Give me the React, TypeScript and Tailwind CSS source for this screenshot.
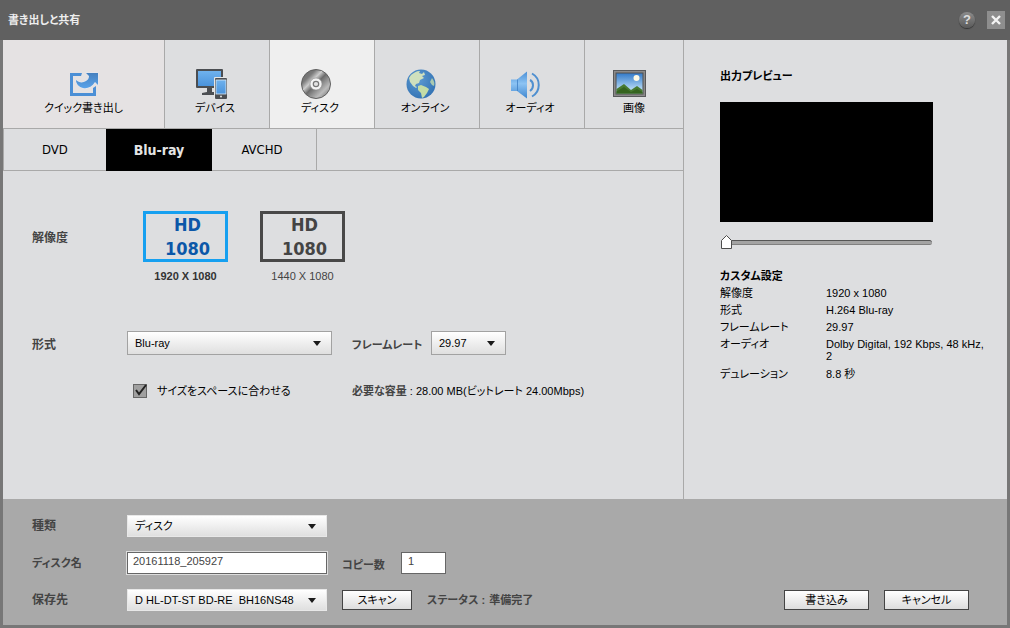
import React, { useState } from "react";
import clsx from "clsx";

const QuickIcon = () => (
  <svg width="32" height="32" viewBox="0 0 32 32">
    <defs>
      <linearGradient id="quick" x1="0" y1="0" x2="0" y2="1">
        <stop offset="0" stopColor="#4580bf" />
        <stop offset="1" stopColor="#5aa3ea" />
      </linearGradient>
    </defs>
    <path d="M14 5l-1 3H5v17h20v-5l3-2v10H2V5z" fill="#4b8fd6" />
    <path
      d="M18 5h12v12l-3-3c-3 5-8 7-12 6-4-1-7-4-7-8 3 3 7 3 10 1 2-1 3-3 3-5z"
      fill="url(#quick)"
      stroke="#e5eefa"
      strokeWidth="0.8"
      paintOrder="stroke"
    />
  </svg>
);

const DeviceIcon = () => (
  <svg width="32" height="32" viewBox="0 0 32 32">
    <defs>
      <linearGradient id="screen" x1="0" y1="0" x2="0" y2="1">
        <stop offset="0" stopColor="#6fb2ee" />
        <stop offset="1" stopColor="#4a93dc" />
      </linearGradient>
    </defs>
    <rect x="1" y="1" width="27" height="19" rx="1" fill="#4b4e52" />
    <rect x="3" y="3" width="23" height="15" fill="url(#screen)" />
    <path d="M12 20h5v4h2v3H7v-2l5-1z" fill="#4b4e52" />
    <rect x="19" y="9" width="13" height="22" rx="1" fill="#e6e6e6" />
    <rect x="20" y="10" width="12" height="21" rx="1" fill="#4b4e52" />
    <rect x="21" y="12" width="10" height="14" fill="url(#screen)" stroke="#dceaf7" strokeWidth="0.8" />
    <circle cx="26" cy="28.5" r="1" fill="#e8e8e8" />
  </svg>
);

const DiscIcon = () => (
  <svg width="32" height="32" viewBox="0 0 32 32">
    <defs>
      <linearGradient id="disc" x1="0" y1="0" x2="1" y2="1">
        <stop offset="0" stopColor="#606060" />
        <stop offset="0.25" stopColor="#7b7b7b" />
        <stop offset="0.38" stopColor="#cccccc" />
        <stop offset="0.5" stopColor="#6c6c6c" />
        <stop offset="0.75" stopColor="#bcbcbc" />
        <stop offset="1" stopColor="#5c5c5c" />
      </linearGradient>
    </defs>
    <circle cx="16" cy="16" r="14.5" fill="url(#disc)" stroke="#606060" />
    <circle cx="16" cy="16" r="6" fill="#f4f4f4" stroke="#8d8d8d" strokeWidth="0.6" />
    <circle cx="16" cy="16" r="2.7" fill="#e2e2e2" stroke="#777777" strokeWidth="1.2" />
  </svg>
);

const GlobeIcon = () => (
  <svg width="32" height="32" viewBox="0 0 32 32">
    <defs>
      <radialGradient id="globe" cx="0.4" cy="0.35" r="0.7">
        <stop offset="0" stopColor="#5d9ad2" />
        <stop offset="1" stopColor="#3272b3" />
      </radialGradient>
    </defs>
    <circle cx="16" cy="16" r="14.5" fill="url(#globe)" />
    <path
      d="M6 7c3-2 5-4 9-4l-1 2 3 1 2-2 1 3-3 1 2 2-4 2-1 3-3 1-1 2 2 1-1 1-3-2-3-4-1-4z"
      fill="#cfe0bd"
    />
    <path d="M13 18l3-1 5 2 3 2-2 4-3 4-2 1-1-5-3-3z" fill="#c3dca6" />
    <path d="M27 10c2 3 3 5 2 8l-2-1-2-3z" fill="#a9c9b0" />
  </svg>
);

const SpeakerIcon = () => (
  <svg width="32" height="32" viewBox="0 0 32 32">
    <defs>
      <linearGradient id="speaker" x1="0" y1="0" x2="0" y2="1">
        <stop offset="0" stopColor="#4a8fd6" />
        <stop offset="0.45" stopColor="#8cc3f3" />
        <stop offset="1" stopColor="#3f86cf" />
      </linearGradient>
    </defs>
    <path d="M1 11.500h6L17 3.500v27L7 23H1z" fill="url(#speaker)" />
    <path d="M7.500 11.500V23" stroke="#3f7fc4" strokeWidth="0.8" />
    <path d="M20 12c4 2 4 8 0 11" fill="none" stroke="#4e8fd0" strokeWidth="2" />
    <path d="M22 5.500c9 5 9 18 0 23" fill="none" stroke="#4e8fd0" strokeWidth="2" />
  </svg>
);

const PictureIcon = () => (
  <svg width="34" height="32" viewBox="0 0 34 32">
    <defs>
      <linearGradient id="sky" x1="0" y1="0" x2="0" y2="1">
        <stop offset="0" stopColor="#3179c9" />
        <stop offset="0.8" stopColor="#b9dcf6" />
      </linearGradient>
    </defs>
    <rect x="0.500" y="2.500" width="32" height="26" fill="#8a8a8a" stroke="#58595b" />
    <rect x="3" y="5" width="27" height="21" fill="url(#sky)" stroke="#505050" />
    <circle cx="23.500" cy="10" r="3" fill="#fffbe6" />
    <path d="M3.500 21L11 16l7 6 6-4 5.500 4v3.500h-26z" fill="#477a31" />
    <path d="M3.500 25.500v-2L11 19l7 5 6-3 5.500 3v1.500z" fill="#35641f" />
  </svg>
);

const mainTabs = [
  { label: "クイック書き出し", icon: <QuickIcon />, cell: "w-[162px] border-r bg-[#e5e2e3]" },
  { label: "デバイス", icon: <DeviceIcon />, cell: "w-[105px] border-r pr-1", iconBox: "mr-2" },
  { label: "ディスク", icon: <DiscIcon />, cell: "w-[105px] border-r pr-1 bg-[#efefef]", iconBox: "mr-2" },
  { label: "オンライン", icon: <GlobeIcon />, cell: "w-[105px] border-r pr-1", iconBox: "mr-2" },
  { label: "オーディオ", icon: <SpeakerIcon />, cell: "w-[105px] border-r pr-1", iconBox: "mr-2" },
  { label: "画像", icon: <PictureIcon />, cell: "flex-1", iconBox: "mr-2" },
];

const resolutions = [
  { id: "1920", label: "1920 X 1080" },
  { id: "1440", label: "1440 X 1080" },
];

const summary = [
  { name: "解像度", value: "1920 x 1080" },
  { name: "形式", value: "H.264 Blu-ray" },
  { name: "フレームレート", value: "29.97" },
  { name: "オーディオ", value: "Dolby Digital, 192 Kbps, 48 kHz, 2", long: true },
  { name: "デュレーション", value: "8.8 秒" },
];

type SelectProps = {
  id: string;
  options: string[];
  className?: string;
};

function Select({ id, options, className }: SelectProps) {
  return (
    <div className={clsx("relative", className)}>
      <select
        id={id}
        className="block h-full w-full appearance-none border border-inherit bg-linear-to-b from-white to-[#dfdfdf] pl-[7px] pr-5 text-[11px] font-normal text-black"
      >
        {options.map((option) => (
          <option key={option}>{option}</option>
        ))}
      </select>
      <svg
        className="pointer-events-none absolute right-[11px] top-1/2 -mt-0.5"
        width="8"
        height="5"
        viewBox="0 0 8 5"
      >
        <path d="M0 0h8L4 5z" fill="#1a1a1a" />
      </svg>
    </div>
  );
}

function Seek() {
  const [position, setPosition] = useState(0);

  return (
    <div className="relative flex h-4 w-[213px] items-center pl-1 pr-px">
      <input
        type="range"
        aria-label="プレビュー位置"
        value={position}
        onChange={(e) => setPosition(Number(e.target.value))}
        className="h-[5px] w-full appearance-none rounded-full border-b border-t border-b-[#808080] border-t-[#555555] bg-[#a3a3a3] [&::-webkit-slider-thumb]:appearance-none"
      />
      <svg
        className="pointer-events-none absolute top-px"
        style={{ left: 1 + position * 2 }}
        width="11"
        height="14"
        viewBox="0 0 11 14"
      >
        <path d="M0.500 5.500l5-5 5 5v8h-10z" fill="#ffffff" stroke="#4c4c4c" />
      </svg>
    </div>
  );
}

function App() {
  const [resolution, setResolution] = useState("1920");
  const [fitSize, setFitSize] = useState(true);

  return (
    <div className="flex min-h-screen flex-col bg-[#777777] font-['Liberation_Sans','Noto_Sans_CJK_JP',sans-serif] text-[11px] leading-4 text-black [font-feature-settings:'palt']">
      <header className="flex h-10 items-center justify-between bg-[#606060] pl-2 pr-[5px]">
        <h1 className="font-bold text-[#eeeeee]">書き出しと共有</h1>
        <div className="flex items-center gap-3">
          <button
            aria-label="ヘルプ"
            className="h-4 w-4 rounded-full bg-linear-to-b from-[#8c8c8c] to-[#5a5a5a] text-[13px] font-bold leading-4 text-[#dddddd] shadow-[0_1px_1px_#333333]"
          >
            ?
          </button>
          <button
            aria-label="閉じる"
            className="flex h-[18px] w-[18px] items-center justify-center bg-[#8e8e8e]"
          >
            <svg width="10" height="10" viewBox="0 0 10 10">
              <path d="M1 1l8 8M9 1L1 9" stroke="#f4f4f4" strokeWidth="2.400" />
            </svg>
          </button>
        </div>
      </header>

      <main className="mx-[3px] flex flex-1 bg-[#dddee0]">
        <section className="flex-1">
          <nav className="flex h-[89px] border-b border-[#a9a9a9]">
            {mainTabs.map((tab) => (
              <button
                key={tab.label}
                className={clsx(
                  "flex flex-col items-center justify-end border-[#a9a9a9] pb-3",
                  tab.cell
                )}
              >
                <span className={tab.iconBox}>{tab.icon}</span>
                <span>{tab.label}</span>
              </button>
            ))}
          </nav>

          <nav className="flex h-[42px] border-b border-[#a9a9a9] font-['DejaVu_Sans_Condensed','DejaVu_Sans',sans-serif] text-[13px]">
            <button className="w-[103px] border-l border-[#a9a9a9]">DVD</button>
            <button className="-mb-px w-[106px] bg-black text-[14px] font-bold text-[#e4e4e4]">
              Blu-ray
            </button>
            <button className="w-[105px] border-r border-[#a9a9a9] pr-1">AVCHD</button>
          </nav>

          <form className="pl-[29px] pt-10">
            <div className="flex">
              <span className="w-[95px] pt-[19px] text-[12px] font-bold text-[#444444]">解像度</span>
              <div className="flex gap-8 pl-4">
                {resolutions.map((item) => (
                  <label
                    key={item.id}
                    className={clsx(
                      "w-[85px] text-center",
                      resolution === item.id ? "font-bold text-[#333333]" : "text-[#444444]"
                    )}
                  >
                    <input
                      type="radio"
                      name="resolution"
                      className="sr-only"
                      checked={resolution === item.id}
                      onChange={() => setResolution(item.id)}
                    />
                    <span
                      className={clsx(
                        "mb-[6px] flex h-[51px] flex-col items-center justify-center border-[3px] pl-1 font-['DejaVu_Sans_Condensed','DejaVu_Sans',sans-serif] text-[18px] font-bold leading-6",
                        resolution === item.id
                          ? "border-[#16a0f0] text-[#0b57a8]"
                          : "border-[#484848] text-[#444444]"
                      )}
                    >
                      <span>HD</span>
                      <span>1080</span>
                    </span>
                    {item.label}
                  </label>
                ))}
              </div>
            </div>

            <div className="mt-[47px] flex items-center">
              <label htmlFor="format" className="w-[95px] pt-1 text-[12px] font-bold text-[#444444]">
                形式
              </label>
              <Select
                id="format"
                options={["Blu-ray"]}
                className="h-6 w-[205px] border-[#a2a2a2]"
              />
              <label htmlFor="rate" className="w-[99px] pl-5 pt-1 font-bold text-[#444444]">
                フレームレート
              </label>
              <Select id="rate" options={["29.97"]} className="h-6 w-[75px] border-[#a2a2a2]" />
            </div>

            <div className="mt-7 flex items-center pl-[101px]">
              <label className="flex w-[219px] items-center gap-[10px]">
                <span className="relative">
                  <input
                    type="checkbox"
                    checked={fitSize}
                    onChange={(e) => setFitSize(e.target.checked)}
                    className="block h-[14px] w-[14px] appearance-none border border-[#666666] bg-[#a0a0a0]"
                  />
                  {fitSize && (
                    <svg
                      className="pointer-events-none absolute left-0 top-0"
                      width="14"
                      height="14"
                      viewBox="0 0 14 14"
                    >
                      <path d="M3 6l3 4 7-9" fill="none" stroke="#222222" strokeWidth="2" />
                    </svg>
                  )}
                </span>
                サイズをスペースに合わせる
              </label>
              <p className="whitespace-nowrap">
                <b className="text-[#444444]">必要な容量</b> : 28.00 MB(ビットレート 24.00Mbps)
              </p>
            </div>
          </form>
        </section>

        <aside className="w-[324px] border-l border-[#a9a9a9] pl-9 pr-4 pt-7">
          <h2 className="font-bold">出力プレビュー</h2>
          <div className="mb-3 mt-[18px] h-[120px] w-[213px] bg-black" />
          <Seek />
          <h2 className="mt-[18px] font-bold leading-[17px]">カスタム設定</h2>
          <dl className="grid grid-cols-[106px_1fr] leading-[17px]">
            {summary.map((row) => (
              <React.Fragment key={row.name}>
                <dt>{row.name}</dt>
                <dd className={clsx(row.long && "pb-1 pt-0.5 leading-3")}>{row.value}</dd>
              </React.Fragment>
            ))}
          </dl>
        </aside>
      </main>

      <footer className="mx-[3px] mb-[3px] flex items-end justify-between bg-[#a9a9a9] pb-[14px] pl-[29px] pr-[38px] pt-4">
        <div className="flex flex-col gap-[15px] font-bold text-[#444444]">
          <div className="flex h-[22px] items-center">
            <label htmlFor="kind" className="w-[95px] text-[12px]">
              種類
            </label>
            <Select id="kind" options={["ディスク"]} className="h-[22px] w-[200px] border-[#e8e8e8]" />
          </div>
          <div className="flex h-[22px] items-center">
            <label htmlFor="discName" className="w-[95px]">
              ディスク名
            </label>
            <input
              id="discName"
              type="text"
              defaultValue="20161118_205927"
              className="h-[22px] w-[200px] border border-[#666666] bg-white pb-1 pl-[5px] font-normal outline outline-[#dddddd]"
            />
            <label htmlFor="copies" className="w-[74px] pl-[15px] pt-1">
              コピー数
            </label>
            <input
              id="copies"
              type="text"
              defaultValue="1"
              className="h-[22px] w-[45px] border border-[#666666] bg-white pb-1 pl-[6px] font-normal"
            />
          </div>
          <div className="flex h-[22px] items-center">
            <label htmlFor="target" className="w-[95px] text-[12px]">
              保存先
            </label>
            <Select
              id="target"
              options={["D HL-DT-ST BD-RE\u00a0 BH16NS48"]}
              className="h-[22px] w-[200px] border-[#e8e8e8]"
            />
            <button className="ml-[15px] h-5 w-[70px] border border-[#444444] bg-linear-to-b from-white to-[#dddddd] font-normal leading-4 text-black">
              スキャン
            </button>
            <span className="pl-[15px]">ステータス :</span>
            <span className="pl-1">準備完了</span>
          </div>
        </div>
        <div className="flex h-[22px] items-center gap-[15px]">
          <button className="h-5 w-[85px] border border-[#444444] bg-linear-to-b from-white to-[#dddddd] leading-4">
            書き込み
          </button>
          <button className="h-5 w-[85px] border border-[#444444] bg-linear-to-b from-white to-[#dddddd] leading-4">
            キャンセル
          </button>
        </div>
      </footer>
    </div>
  );
}

export default App;
